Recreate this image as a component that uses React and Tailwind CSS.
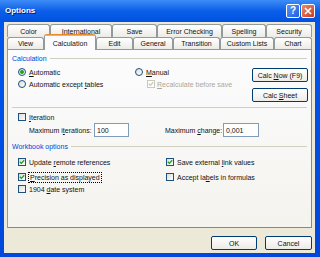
import React from "react";

const U = ({ children }) => <span className="underline underline-offset-[1px]">{children}</span>;

function Radio({ checked }) {
  return (
    <span className="w-[8px] h-[8px] rounded-full border border-[#1c5180] bg-gradient-to-br from-[#dcdcd7] to-white flex items-center justify-center shrink-0">
      {checked && <span className="w-[4px] h-[4px] rounded-full bg-[#21a121]" />}
    </span>
  );
}

function Check({ checked, disabled }) {
  return (
    <span
      className={
        "w-[8px] h-[8px] border flex items-center justify-center shrink-0 " +
        (disabled ? "border-[#cac8bb] bg-white" : "border-[#1c5180] bg-gradient-to-br from-[#dcdcd7] to-white")
      }
    >
      {checked && (
        <svg width="6" height="6" viewBox="0 0 6 6">
          <path d="M0.8 2.8 L2.4 4.4 L5.2 1.2" fill="none" stroke={disabled ? "#cac8bb" : "#21a121"} strokeWidth="1.3" />
        </svg>
      )}
    </span>
  );
}

function Btn({ children, className }) {
  return (
    <div
      className={
        "h-[14px] rounded-[2px] border border-[#003c74] bg-gradient-to-b from-white to-[#ecebe6] flex items-center justify-center " +
        className
      }
    >
      <span className="whitespace-pre">{children}</span>
    </div>
  );
}

function Tab({ children, className }) {
  return (
    <div
      className={
        "border border-b-0 border-[#919b9c] rounded-t-[3px] bg-gradient-to-b from-white to-[#ecebe6] flex items-center justify-center whitespace-nowrap " +
        className
      }
    >
      {children}
    </div>
  );
}

function GroupHeader({ children }) {
  return (
    <div className="h-[10px] flex items-center gap-[3px] pl-[4px] pr-[4px]">
      <span className="text-[#0046d5] whitespace-nowrap">{children}</span>
      <div className="flex-1 h-px bg-[#d0d0bf]" />
    </div>
  );
}

export default function App() {
  return (
    <div
      className="w-[320px] h-[257px] flex flex-col overflow-hidden bg-gradient-to-b from-[#0058ee] to-[#0048dd] text-[7px] leading-none text-[#111]"
      style={{ fontFamily: '"Liberation Sans", Arial, sans-serif' }}
    >
      {/* Title bar */}
      <div className="h-[22px] shrink-0 flex items-center pl-[5px] pr-[5px] bg-gradient-to-b from-[#3d8cf7] via-[#0a5ee8] to-[#0053e0]">
        <span className="text-white font-bold text-[8px] [text-shadow:1px_1px_0_#0a1883]">Options</span>
        <div className="ml-auto flex gap-[1px]">
          <div className="w-[14px] h-[14px] rounded-[2px] border border-white bg-gradient-to-br from-[#5b93f5] to-[#1f5fe0] flex items-center justify-center">
            <span className="text-white font-bold text-[10px] leading-none">?</span>
          </div>
          <div className="w-[14px] h-[14px] rounded-[2px] border border-white bg-gradient-to-br from-[#e98a6f] to-[#c8391b] flex items-center justify-center">
            <svg width="8" height="8" viewBox="0 0 8 8">
              <path d="M1 1 L7 7 M7 1 L1 7" stroke="white" strokeWidth="1.6" />
            </svg>
          </div>
        </div>
      </div>

      {/* Body */}
      <div className="flex-1 ml-[4px] mr-[5px] mb-[4px] bg-[#ece9d8] flex flex-col pl-[3px] pr-[3px]">
        {/* Tab rows */}
        <div className="mt-[2px] h-[13px] flex">
          <Tab className="w-[43px]">Color</Tab>
          <Tab className="w-[62px]">International</Tab>
          <Tab className="w-[45px]">Save</Tab>
          <Tab className="w-[65px]">Error Checking</Tab>
          <Tab className="w-[44px]">Spelling</Tab>
          <Tab className="w-[46px]">Security</Tab>
        </div>
        <div className="h-[12px] flex items-end">
          <Tab className="w-[37px] h-[12px]">View</Tab>
          <div className="relative z-10 w-[52px] h-[16px] -mb-px border-x border-[#919b9c] rounded-t-[3px] bg-[#fcfcfe] flex flex-col">
            <div className="h-[2px] rounded-t-[2px] bg-[#f7b53e] border-t border-[#e68b2c]" />
            <div className="flex-1 flex items-center justify-center">Calculation</div>
          </div>
          <Tab className="w-[37px] h-[12px]">Edit</Tab>
          <Tab className="w-[40px] h-[12px]">General</Tab>
          <Tab className="w-[47px] h-[12px]">Transition</Tab>
          <Tab className="w-[54px] h-[12px]">Custom Lists</Tab>
          <Tab className="w-[38px] h-[12px]">Chart</Tab>
        </div>

        {/* Panel */}
        <div className="h-[179px] border border-[#919b9c] border-r-[#828790] border-b-[#828790] bg-gradient-to-b from-[#fcfcfe] to-[#f4f3ee] flex flex-col pt-[3px]">
          <GroupHeader>Calculation</GroupHeader>

          <div className="mt-[3px] flex">
            <div className="pl-[10px] w-[127px] flex flex-col">
              <div className="h-[12px] flex items-center gap-[3px]">
                <Radio checked />
                <span><U>A</U>utomatic</span>
              </div>
              <div className="h-[12px] flex items-center gap-[3px]">
                <Radio />
                <span>Automatic except <U>t</U>ables</span>
              </div>
            </div>
            <div className="flex flex-col">
              <div className="h-[12px] flex items-center gap-[3px]">
                <Radio />
                <span><U>M</U>anual</span>
              </div>
              <div className="h-[12px] flex items-center gap-[2px] pl-[12px] text-[#aca899]">
                <Check checked disabled />
                <span><U>R</U>ecalculate before save</span>
              </div>
            </div>
            <div className="ml-auto mr-[3px] mt-[2px] flex flex-col gap-[6px]">
              <Btn className="w-[56px]">Calc <U>N</U>ow (F9)</Btn>
              <Btn className="w-[56px]">Calc <U>S</U>heet</Btn>
            </div>
          </div>

          <div className="mt-[5px] mx-[4px] h-px bg-[#d0d0bf]" />

          <div className="mt-[3px] pl-[10px] h-[12px] flex items-center gap-[3px]">
            <Check />
            <span><U>I</U>teration</span>
          </div>
          <div className="pl-[21px] h-[14px] flex items-center">
            <span className="w-[65px]">Maximum i<U>t</U>erations:</span>
            <div className="w-[35px] h-[14px] border border-[#7f9db9] bg-white flex items-center pl-[2px]">100</div>
            <span className="ml-[36px] w-[58px]">Maximum <U>c</U>hange:</span>
            <div className="w-[36px] h-[14px] border border-[#7f9db9] bg-white flex items-center pl-[2px]">0,001</div>
          </div>

          <div className="mt-[4px]">
            <GroupHeader>Workbook options</GroupHeader>
          </div>

          <div className="mt-[5px] flex">
            <div className="pl-[10px] w-[158px] flex flex-col">
              <div className="h-[12px] flex items-center gap-[3px]">
                <Check checked />
                <span>Update <U>r</U>emote references</span>
              </div>
              <div className="mt-[3px] h-[12px] flex items-center gap-[2px]">
                <Check checked />
                <span className="border border-dotted border-black px-[1px] py-[1px]"><U>P</U>recision as displayed</span>
              </div>
              <div className="h-[12px] flex items-center gap-[3px]">
                <Check />
                <span>1904 <U>d</U>ate system</span>
              </div>
            </div>
            <div className="flex flex-col">
              <div className="h-[12px] flex items-center gap-[3px]">
                <Check checked />
                <span>Save external <U>l</U>ink values</span>
              </div>
              <div className="mt-[3px] h-[12px] flex items-center gap-[3px]">
                <Check />
                <span>Accept la<U>b</U>els in formulas</span>
              </div>
            </div>
          </div>
        </div>

        {/* Buttons */}
        <div className="mt-[8px] flex justify-end gap-[8px]">
          <Btn className="w-[46px]">OK</Btn>
          <Btn className="w-[47px]">Cancel</Btn>
        </div>
      </div>
    </div>
  );
}
